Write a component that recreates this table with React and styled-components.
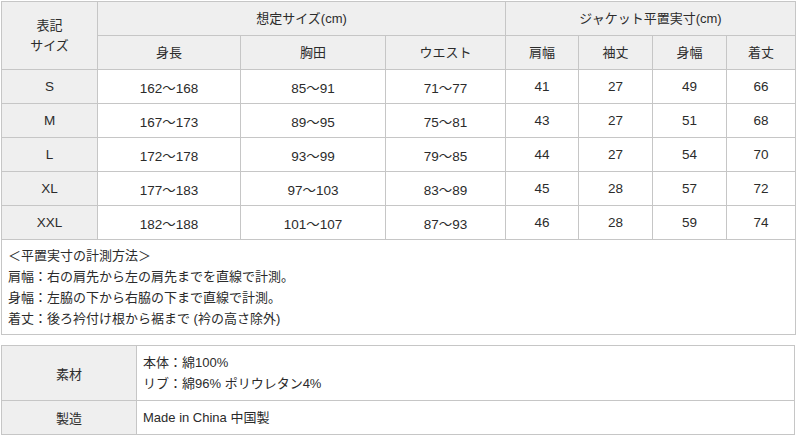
import React from "react";
import styled, { createGlobalStyle } from "styled-components";

const GlobalStyle = createGlobalStyle`
  body {
    margin: 0;
    background: #ffffff;
    font-family: 'Liberation Sans', 'Noto Sans CJK JP', sans-serif;
    color: #2b2b2b;
  }
`

const Page = styled.div`
  width: 794px;
  padding: 1px 0 0 1px;
`

const Table = styled.table`
  width: 794px;
  border-collapse: collapse;
  table-layout: fixed;
  font-size: 13px;
  margin-top: ${(p) => p.$gap || 0}px;
`

const Head = styled.th`
  background: #efefef;
  border: 1px solid #c6c6c6;
  font-weight: 400;
  text-align: center;
  height: 33px;
  padding: 0;
  line-height: 20px;
`

const Cell = styled.td`
  background: ${(p) => (p.$gray ? "#efefef" : "#ffffff")};
  border: 1px solid #c6c6c6;
  text-align: center;
  height: 33px;
  padding: 0;
  font-size: 13.5px;
`

const Notes = styled.td`
  border: 1px solid #c6c6c6;
  padding: 5px 6px 5px;
  line-height: 21px;
  height: 84px;
  vertical-align: top;
`

const InfoHead = styled.th`
  background: #efefef;
  border: 1px solid #c6c6c6;
  font-weight: 400;
  text-align: center;
  padding: 0;
  height: ${(p) => p.$h}px;
`

const InfoCell = styled.td`
  border: 1px solid #c6c6c6;
  padding: 0 6px;
  line-height: 21px;
  text-align: left;
`

const widths = [96, 143, 145, 120, 73, 74, 74, 69];

const rows = [
  ["S", "162〜168", "85〜91", "71〜77", "41", "27", "49", "66"],
  ["M", "167〜173", "89〜95", "75〜81", "43", "27", "51", "68"],
  ["L", "172〜178", "93〜99", "79〜85", "44", "27", "54", "70"],
  ["XL", "177〜183", "97〜103", "83〜89", "45", "28", "57", "72"],
  ["XXL", "182〜188", "101〜107", "87〜93", "46", "28", "59", "74"],
];

function App() {
  return (
    <Page>
      <GlobalStyle />
      <Table>
        <colgroup>
          {widths.map((w, i) => (
            <col key={i} style={{ width: w }} />
          ))}
        </colgroup>
        <thead>
          <tr>
            <Head rowSpan={2}>表記<br />サイズ</Head>
            <Head colSpan={3}>想定サイズ(cm)</Head>
            <Head colSpan={4}>ジャケット平置実寸(cm)</Head>
          </tr>
          <tr>
            <Head>身長</Head>
            <Head>胸田</Head>
            <Head>ウエスト</Head>
            <Head>肩幅</Head>
            <Head>袖丈</Head>
            <Head>身幅</Head>
            <Head>着丈</Head>
          </tr>
        </thead>
        <tbody>
          {rows.map((r) => (
            <tr key={r[0]}>
              {r.map((v, i) => (
                <Cell key={i} $gray={i === 0}>{v}</Cell>
              ))}
            </tr>
          ))}
          <tr>
            <Notes colSpan={8}>
              ＜平置実寸の計測方法＞<br />
              肩幅：右の肩先から左の肩先までを直線で計測。<br />
              身幅：左脇の下から右脇の下まで直線で計測。<br />
              着丈：後ろ衿付け根から裾まで (衿の高さ除外)
            </Notes>
          </tr>
        </tbody>
      </Table>
      <Table $gap={10}>
        <colgroup>
          <col style={{ width: 135 }} />
          <col />
        </colgroup>
        <tbody>
          <tr>
            <InfoHead $h={54}>素材</InfoHead>
            <InfoCell>
              本体：綿100%<br />
              リブ：綿96% ポリウレタン4%
            </InfoCell>
          </tr>
          <tr>
            <InfoHead $h={33}>製造</InfoHead>
            <InfoCell>Made in China 中国製</InfoCell>
          </tr>
        </tbody>
      </Table>
    </Page>
  );
}

export default App
